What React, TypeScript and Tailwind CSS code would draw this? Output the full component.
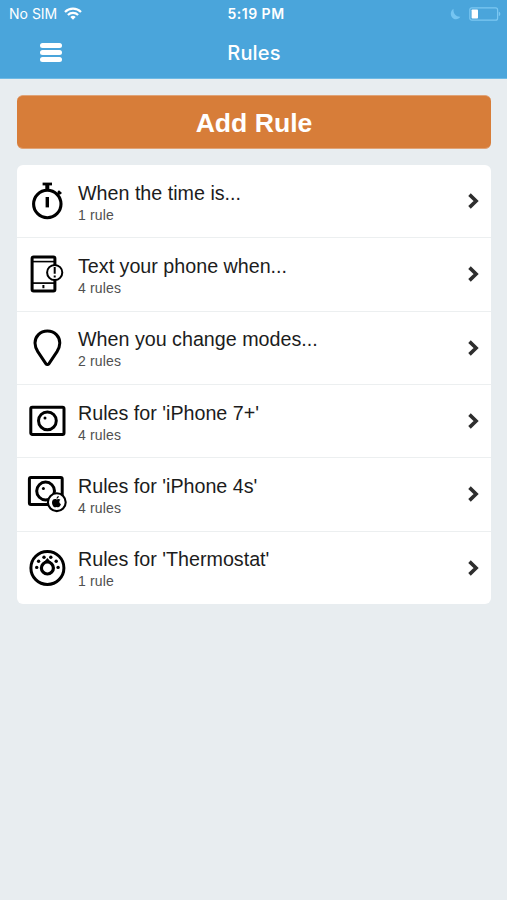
import type { ReactNode } from "react";

function StopwatchIcon() {
  return (
    <svg className="w-10 h-10 shrink-0" viewBox="0 0 40 40" fill="none" stroke="#000">
      <circle cx="20.3" cy="23" r="13.7" strokeWidth="3.1" />
      <path d="M15.6 3h9.4" strokeWidth="2.8" />
      <path d="M20.3 3v7" strokeWidth="4" />
      <path d="M20.3 16v10.4" strokeWidth="3.4" />
      <path d="M30 14.2l3.2-3.4" strokeWidth="3" />
      <path d="M31.2 10l3 2.8" strokeWidth="2.2" />
    </svg>
  );
}

function PhoneIcon() {
  return (
    <svg className="w-10 h-10 shrink-0" viewBox="0 0 40 40" fill="none" stroke="#000">
      <rect x="5.1" y="3" width="22.8" height="34" rx="1.5" strokeWidth="3" />
      <path d="M5 7.6h23" strokeWidth="1.6" />
      <path d="M5 29.1h23" strokeWidth="1.7" />
      <path d="M16.4 31v3.2" strokeWidth="2" />
      <circle cx="27.7" cy="18.5" r="7.6" fill="#fff" strokeWidth="2" />
      <path d="M27.7 13v6.8M27.7 21.4v2.2" strokeWidth="2" />
    </svg>
  );
}

function PinIcon() {
  return (
    <svg className="w-10 h-10 shrink-0" viewBox="0 0 40 40" fill="none" stroke="#000">
      <path
        d="M20.4 3C13 3 8 8.6 8 15c0 3 1.1 5.8 2.8 8.6l8 12c.8 1.2 2.4 1.2 3.2 0l8-12c1.7-2.8 2.8-5.6 2.8-8.6C32.8 8.6 27.8 3 20.4 3z"
        strokeWidth="3"
      />
    </svg>
  );
}

function CameraIcon() {
  return (
    <svg className="w-10 h-10 shrink-0" viewBox="0 0 40 40" fill="none" stroke="#000">
      <rect x="3.8" y="6.2" width="33.2" height="27.2" rx="1.5" strokeWidth="3" />
      <circle cx="20.4" cy="19.8" r="8.9" strokeWidth="3" />
      <circle cx="18" cy="17" r="1.5" fill="#000" stroke="none" />
    </svg>
  );
}

function AppleCameraIcon() {
  return (
    <svg className="w-10 h-10 shrink-0" viewBox="0 0 40 40" fill="none" stroke="#000">
      <rect x="2.4" y="3.4" width="32.8" height="27.2" rx="1.5" strokeWidth="3" />
      <circle cx="18.6" cy="17" r="8.9" strokeWidth="3" />
      <circle cx="16.4" cy="14.6" r="1.5" fill="#000" stroke="none" />
      <circle cx="29.8" cy="28.2" r="8.9" fill="#fff" strokeWidth="2.1" />
      <path
        d="M29.7 25.4c.9-.5 2.5-1 3.7.4-1.7 1.2-1.4 3.5.5 4.4-.6 1.7-1.7 3.1-2.7 3.1-.7 0-.9-.3-1.6-.3s-1 .3-1.6.3c-1.4 0-3-2.8-3-4.9 0-3 2.7-4.1 4.7-3zM29.5 24.7c0-1.6 1-2.5 2.3-2.7.1 1.5-.9 2.6-2.3 2.7z"
        fill="#000"
        stroke="none"
      />
    </svg>
  );
}

function ThermostatIcon() {
  return (
    <svg className="w-10 h-10 shrink-0" viewBox="0 0 40 40" fill="none" stroke="#000">
      <circle cx="20.4" cy="19.9" r="16.5" strokeWidth="3" />
      <circle cx="20.4" cy="20" r="6" strokeWidth="3.2" />
      <path d="M16.8 14.2l3.6-4.2 3.6 4.2z" fill="#000" stroke="none" />
      <g fill="#000" stroke="none">
        <circle cx="9.7" cy="19.4" r="1.7" />
        <circle cx="11.6" cy="13.2" r="1.7" />
        <circle cx="17" cy="9.2" r="1.7" />
        <circle cx="23.8" cy="9.2" r="1.7" />
        <circle cx="29.2" cy="13.2" r="1.7" />
        <circle cx="31.1" cy="19.4" r="1.7" />
      </g>
    </svg>
  );
}

type Rule = {
  title: string;
  count: string;
  icon: ReactNode;
};

const rules: Rule[] = [
  { title: "When the time is...", count: "1 rule", icon: <StopwatchIcon /> },
  { title: "Text your phone when...", count: "4 rules", icon: <PhoneIcon /> },
  { title: "When you change modes...", count: "2 rules", icon: <PinIcon /> },
  { title: "Rules for 'iPhone 7+'", count: "4 rules", icon: <CameraIcon /> },
  { title: "Rules for 'iPhone 4s'", count: "4 rules", icon: <AppleCameraIcon /> },
  { title: "Rules for 'Thermostat'", count: "1 rule", icon: <ThermostatIcon /> },
];

function StatusBar() {
  return (
    <div className="grid grid-cols-3 items-center h-[27px] pl-[9px] pr-1.5 text-[14px] font-['Inter',sans-serif]">
      <div className="flex items-center gap-[7px]">
        <span>No SIM</span>
        <svg className="w-[18px] h-[13px]" viewBox="0 0 18 13" fill="none" stroke="#fff" strokeWidth="2.2">
          <path d="M1 5a11.3 11.3 0 0 1 16 0" />
          <path d="M3.9 8a7.2 7.2 0 0 1 10.2 0" />
          <path d="M9 12.700L6.3 10a3.8 3.8 0 0 1 5.4 0z" fill="#fff" stroke="none" />
        </svg>
      </div>
      <span className="pl-0.5 text-center font-semibold tracking-[0.5px]">5:19 PM</span>
      <div className="flex items-center justify-end gap-2">
        <svg className="w-[11px] h-[12px]" viewBox="0 0 11 12">
          <path d="M3.5.8C-.2 3.200-.1 8.800 3.600 10.700c2.400 1.200 5.400.5 6.800-1.900C6 9.200 3 5.600 3.500.8z" fill="#75c5f2" />
        </svg>
        <svg className="w-8 h-[14px]" viewBox="0 0 32 14">
          <rect x=".8" y=".8" width="27.8" height="12.4" rx="2" fill="none" stroke="#7cc8f2" strokeWidth="1.2" />
          <rect x="2.6" y="2.4" width="6.4" height="9.2" rx=".8" fill="#fff" />
          <path d="M29.8 4.8c2 .6 2 3.8 0 4.4z" fill="#7cc8f2" />
        </svg>
      </div>
    </div>
  );
}

function Header() {
  return (
    <header className="h-[79px] bg-[#4aa5db] border-b border-[#6fbae5] text-white">
      <StatusBar />
      <div className="grid grid-cols-3 items-center h-[51px]">
        <button className="flex flex-col gap-0.5 w-[22px] ml-10" aria-label="Menu">
          <span className="h-[5px] w-full rounded-full bg-white" />
          <span className="h-[5px] w-full rounded-full bg-white" />
          <span className="h-[5px] w-full rounded-full bg-white" />
        </button>
        <h1 className="pl-px text-center text-[20px] tracking-[0.2px] font-medium font-['Inter',sans-serif]">Rules</h1>
      </div>
    </header>
  );
}

function RuleRow({ rule }: { rule: Rule }) {
  return (
    <li className="flex flex-1 items-center pl-2.5 pr-3 border-b border-[#eceff0] last:border-b-0">
      {rule.icon}
      <div className="flex-1 ml-[11px] pt-[3px]">
        <p className="text-[19.7px] leading-6 text-[#1c1c1c]">{rule.title}</p>
        <p className="text-[14px] leading-5 tracking-[0.15px] text-[#505050]">{rule.count}</p>
      </div>
      <svg className="w-3 h-4" viewBox="0 0 12 16" fill="none" stroke="#2e2e2e" strokeWidth="3.6">
        <path d="M2.5 1.6L9.1 8l-6.6 6.4" />
      </svg>
    </li>
  );
}

export default function App() {
  return (
    <div className="h-[900px] w-full bg-[#e8edf0] font-['Liberation_Sans',Arial,sans-serif]">
      <Header />
      <main className="pl-[17px] pr-4 pt-4">
        <button className="block w-full h-[54px] pt-1 rounded-md border-y border-[#e0a377] bg-[#d77d39] text-white text-[26.6px] font-bold">
          Add Rule
        </button>
        <ul className="flex flex-col h-[439px] mt-4 rounded-md bg-white">
          {rules.map((rule) => (
            <RuleRow key={rule.title} rule={rule} />
          ))}
        </ul>
      </main>
    </div>
  );
}
